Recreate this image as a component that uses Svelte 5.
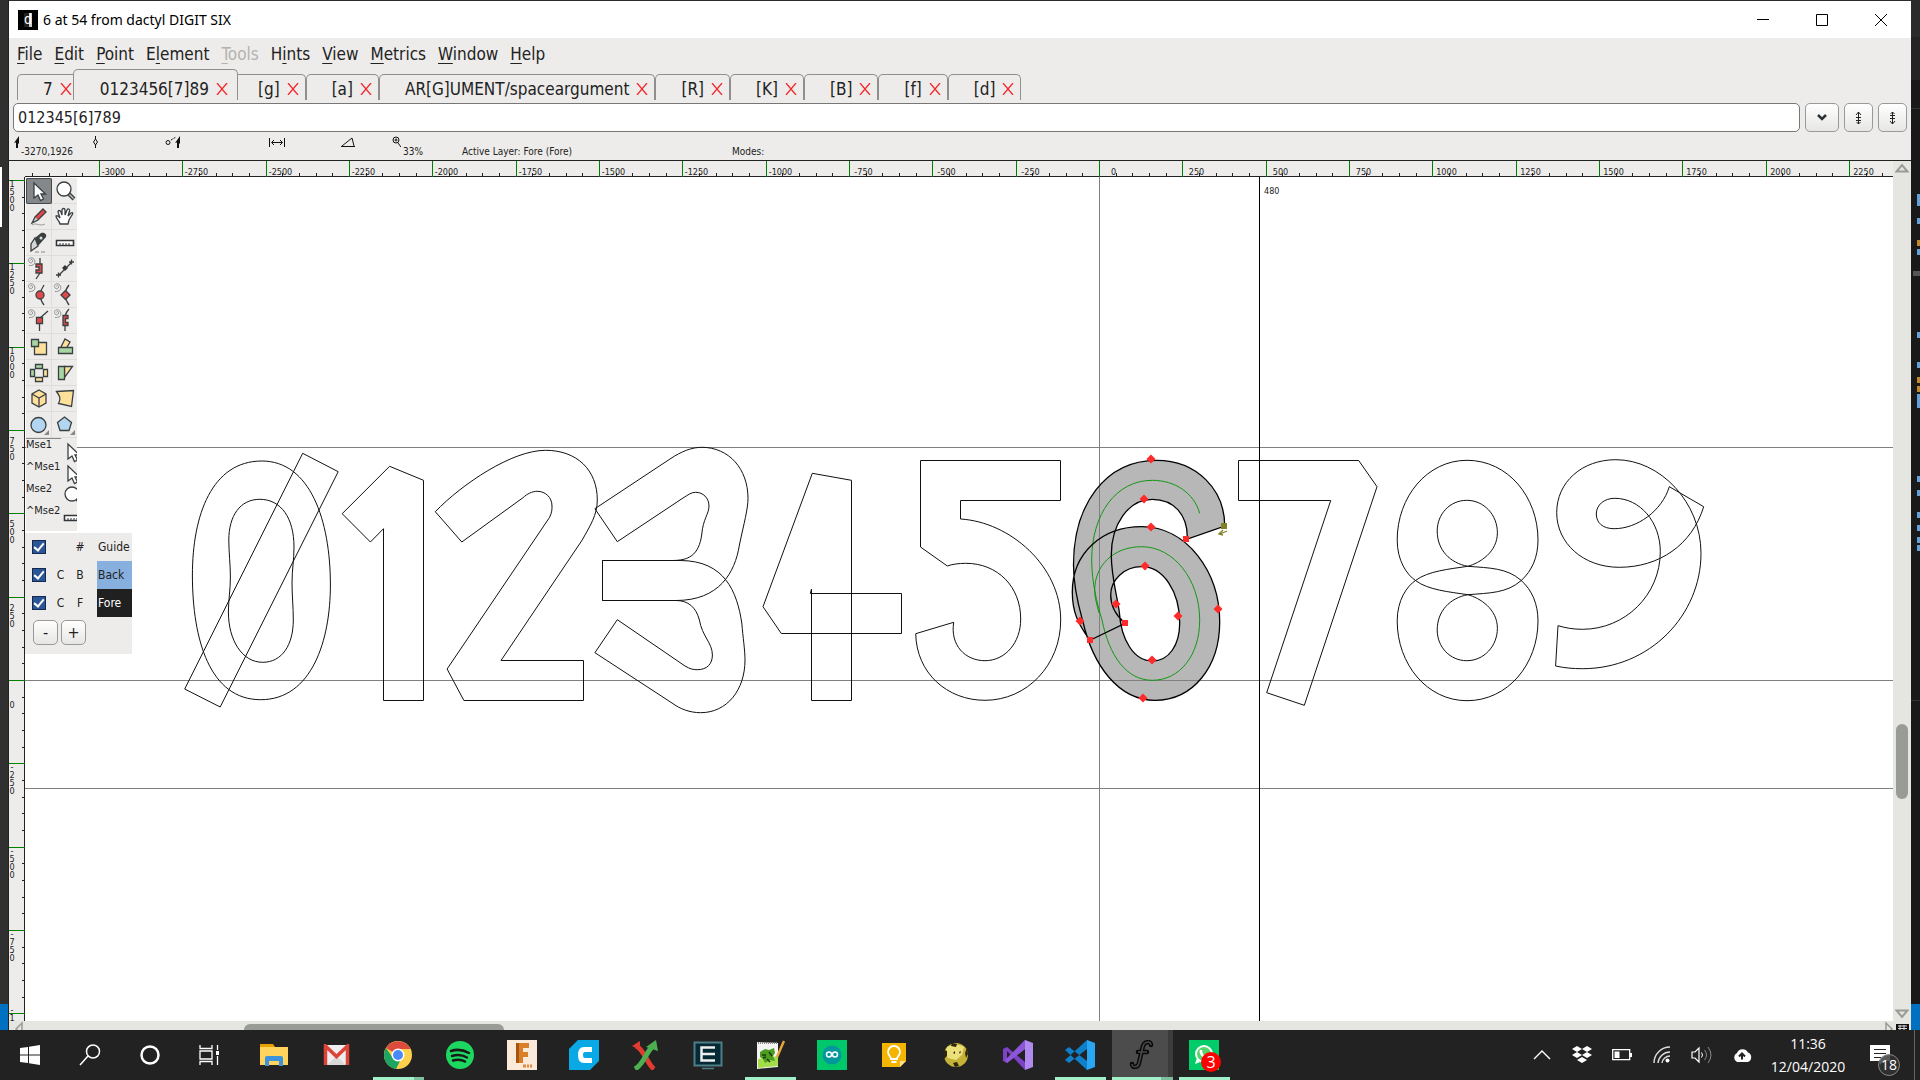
<script>
  const svg = (w, h, body) =>
    `<svg xmlns="http://www.w3.org/2000/svg" width="${w}" height="${h}" viewBox="0 0 ${w} ${h}" fill="none" aria-hidden="true" style="display:block">${body}</svg>`;

  const menus = [
    ['', 'F', 'ile'], ['', 'E', 'dit'], ['', 'P', 'oint'], ['E', 'l', 'ement'], ['', 'T', 'ools', true],
    ['H', 'i', 'nts'], ['', 'V', 'iew'], ['', 'M', 'etrics'], ['', 'W', 'indow'], ['', 'H', 'elp']
  ];

  const tabs = ['7', '0123456[7]89', '[g]', '[a]', 'AR[G]UMENT/spaceargument', '[R]', '[K]', '[B]', '[f]', '[d]'];
  let activeTab = $state(1);
  let word = $state('012345[6]789');

  const curl = '<path d="M3 9.500c4 .500 7-2 5.500-5.500S2 1.500 2.500 4.500s4 3 4 .500-2-1.500-2-.500" stroke="#8a9092"/>';
  const ink = 'stroke="#3a4042" stroke-width="1.300"';
  const arrow = `<path d="M8 5v15l4-3 2.500 5.500 3-1.500-2.500-5h4.500z" fill="#fff" stroke="#3a4042" stroke-width="1.300"/>`;
  const lens = `<circle cx="12" cy="11" r="7" fill="#fff" ${ink}/><path d="m17 16 5 5" stroke="#3a4042" stroke-width="4"/><path d="m17.500 16.500 4 4" stroke="#bbb" stroke-width="1.500"/>`;
  const rule = `<path d="M4.500 10.500h17v5h-17z" fill="#fff" stroke="#33373a" stroke-width="1.600"/><path d="M8 15v-2m3 2v-2m3 2v-2m3 2v-2" stroke="#33373a"/>`;

  const tools = [
    ['Pointer', arrow],
    ['Magnify', lens],
    ['Freehand', `<path d="m9 13 8-8 3 3-8 8-4 1z" fill="#e0484a" ${ink}/><path d="m9 13-3 6 6-3" fill="#ccc" ${ink}/><path d="M6 21c5-3 7 2 13-1" stroke="#999"/>`],
    ['Hand', `<path d="M8 20c-1-4-4-5-4-8 2-1 3 1 4 2L6 8c0-2 2-2 3 0l1 3V6c0-2 3-2 3 0v5l2-5c1-2 3-1 2.500 1l-1.500 5 3-3c2-1 2 1 1 2l-3 5-1 4z" fill="#fff" ${ink}/>`],
    ['Knife', `<path d="m9 8 6-5c3-1 6 1 5 4l-8 9z" fill="#3a4042"/><path d="m9 8 3 8-7 5v-7z" fill="#d5d7d6" ${ink}/><circle cx="15" cy="8" r="1.500" fill="#ddd"/><path d="M9 22h12" stroke="#888" stroke-dasharray="4 2"/>`],
    ['Ruler', rule],
    ['Spiro curve point', curl + `<path d="M14 2v6m0 9-4 6" ${ink}/><path d="M10 8h6v9h-6v-3h3v-3h-3z" fill="#e0484a" ${ink}/>`],
    ['Spiro line', `<path d="m7 19 13-13M4 19h5M6.500 16.500v5M17 6h5M19.500 3.500v5" ${ink}/><path d="m10 12 3-3 3 3-3 3z" fill="#33373a"/>`],
    ['Curve point', curl + `<path d="M18 3c-4 6-6 12 0 20" ${ink}/><circle cx="14" cy="13" r="4" fill="#e0484a" ${ink}/>`],
    ['HVCurve point', curl + `<path d="M17 3c-5 6-5 13 0 20" ${ink}/><path d="m9 13 4.500-4.500L18 13l-4.500 4.500z" fill="#e0484a" ${ink}/>`],
    ['Corner point', curl + `<path d="m14 10 8-7m-8.500 10v10" ${ink}/><path d="M10.500 9.500h6v6h-6z" fill="#e0484a" ${ink}/>`],
    ['Tangent point', curl + `<path d="M13 8c1-3 2-5 4-7m-4 14v8" ${ink}/><path d="M11 7.500h5v3h-2.500v4H16v3h-5z" fill="#e0484a" ${ink}/>`],
    ['Scale', `<path d="M8.500 8.500h12v12h-12z" fill="#ffe09a" ${ink}/><path d="M5.500 5.500h7v7h-7z" fill="#a8d5a4" ${ink}/>`],
    ['Rotate', `<path d="m9 13 4-8 5 3-4 7z" fill="#ffe09a" ${ink}/><path d="M6.500 13.500h14v6h-14z" fill="#a8d5a4" ${ink}/>`],
    ['Flip', `<path d="M9.500 4.500h7v4h-7zM4.500 9.500h4v7h-4z" fill="#a8d5a4" ${ink}/><path d="M9.500 17.500h7v4h-7zM17.500 9.500h4v7h-4z" fill="#ffe09a" ${ink}/>`],
    ['Skew', `<path d="M12.500 17.500v-11h8z" fill="#ffe09a" ${ink}/><path d="M6.500 6.500h6v13h-6z" fill="#a8d5a4" ${ink}/>`],
    ['3D rotate', `<path d="m13 4 7 4v9l-7 4-7-4V8z" fill="#ffe09a" ${ink}/><path d="m6 8 7 4 7-4m-7 4v9" ${ink}/>`],
    ['Perspective', `<path d="m4.500 5.500 17-1-2 16-13-3c3-5 1-8-2-12z" fill="#ffe09a" ${ink}/>`],
    ['Ellipse', `<circle cx="12.500" cy="13" r="7.500" fill="#b2d5f2" ${ink}/><path d="M23 18v5h-5z" fill="#888"/>`],
    ['Polygon', `<path d="m12.500 5 7 5.500-2.500 8H8L5.500 10.500z" fill="#b2d5f2" ${ink}/><path d="M23 18v5h-5z" fill="#888"/>`]
  ];

  const bindings = [['Mse1', arrow], ['^Mse1', arrow], ['Mse2', lens], ['^Mse2', rule]];

  const status = [
    [svg(12, 12, '<path d="M6 0v8L4 6 1 7zM5 6v6h-2V6z" fill="#111"/>'), '-3270,1926'],
    [svg(9, 12, '<path d="m4.500 3 2 3-2 3-2-3zM4.500 0v3m0 6v3" stroke="#111"/>'), ''],
    [svg(18, 12, '<circle cx="3" cy="6.500" r="2" stroke="#111"/><path d="m6 4 5-3" stroke="#111" stroke-dasharray="2 1"/><path d="M15 0v8l-2-2-3 1zM14 6v6h-2V6z" fill="#111"/>'), ''],
    [svg(17, 12, '<path d="M.5 2v9m15-9v9M3 6.500h10M5 4 2.500 6.500 5 9m6-5 2.500 2.500L11 9" stroke="#111"/>'), ''],
    [svg(17, 12, '<path d="M1 10.500h14M2 10l10-8 2 8" stroke="#111"/>'), ''],
    [svg(10, 12, '<circle cx="5" cy="4" r="3" stroke="#111"/><path d="M5 2.500v3M3.500 4h3M7 7l3 4" stroke="#111"/>'), '33%'],
    ['', 'Active Layer: Fore (Fore)'],
    ['', 'Modes:']
  ];

  // Canvas scale: three font units to one pixel, origin at (1099.5, 680.5)
  const originX = 1099;
  const originY = 680;
  const canvasBottom = 1021;
  const unitX = (u) => Math.round(originX + u / 3) + 0.5;
  const unitY = (u) => Math.round(originY - u / 3) + 0.5;
  const range = (from, to, step) => Array.from({ length: Math.floor((to - from) / step) + 1 }, (_, i) => from + i * step);
  const xMajor = range(-3000, 2250, 250);
  const xMinor = range(-3200, 2350, 50).filter((u) => u % 250);
  const yMajor = range(-1000, 1500, 250);
  const yMinor = range(-1000, 1500, 50).filter((u) => u % 250);

  // Ruler labels on the left are set one digit per line; digits past the canvas are dropped
  const stacked = (u) => {
    const chars = String(u).split('');
    return chars
      .map((ch, i) => ({ ch, y: unitY(u) + 6 + (4 - chars.length) * 7 + i * 8 }))
      .filter((d) => d.y < canvasBottom);
  };

  const half8 = 'M1467 460.300C1427 460.300 1397.200 497 1397.200 540C1397.200 561 1407 575 1415.800 580.700C1428 590 1450 592 1467.800 594.700C1480 598 1497.400 609 1497.400 628.300C1497.400 646 1484 660.700 1466.800 660.700C1450 660.700 1437.200 647 1437.200 630C1437.200 611 1450 598 1467.800 594.700C1490 593 1507 593 1521 580.700C1532 571 1538 557 1538 540C1538 497 1508 460.300 1467 460.300Z';
  const outlines = [
    'M192.400 575C192.400 515 212 461 261.800 461C310 461 330.400 520 330.400 585C330.400 640 312 699.700 260.600 699.700C210 699.700 192.400 640 192.400 575Z',
    'M259.800 499.300C240 499.300 228.800 516 228.800 540C228.800 552 230.400 565 230.400 577C230.400 590 228.400 600 228.400 612C228.400 640 242 662.300 262.700 662.300C282 662.300 293.300 645 293.300 620C293.300 607 292 595 292 583C292 570 294 560 294 547C294 518 281 499.300 259.800 499.300Z',
    'M302.700 453.300L338.200 471.700L220.200 707L184.700 689Z',
    'M389.600 466.300L423.500 480.300V700.500H383.500V528.700L370.400 542L342.200 513.700Z',
    'M435.300 511.700C462 484 512 450.300 545.500 450.300C577 450.300 597.300 470 597.300 500C597.300 515 590 526 582.200 540L501 660.500H583.500V700.500H463.900L447.100 669L549.600 517.300C552 512 552 510 552 506C552 497 545 491.300 537.300 491.300C532 491.300 527 494 523 497.700L461.800 542Z',
    'M594.900 508.700L670 459C682 451 692 447.300 701.800 447.300C729 447.300 748 469 748 498.300C748 509 744 523 739.400 545C735 573 719 600.500 676 600.500H602.500V560.500H672C688 560.500 699 556 701.800 534C703 519 709 514 709 506C709 498 703 492.300 695.700 492.300C691 492.300 688 495 683 498L617.300 541.700Z',
    'M602.500 560.500H680C725 560.500 737 592 741.800 623C743 638 745 650 745 660C745 690 727 712.700 700.600 712.700C690 712.700 680 709 672 703L594.900 652.700L617.300 619.700L685 666C690 669 693 669.700 697.300 669.700C707 669.700 712.400 664 712.400 655C712.400 643 702 636 699.400 620C696 607 688 600.500 676 600.500H602.500Z',
    'M812.300 473.300L851.500 480.300V700.500H811.500V589L810.300 593.500H901.500V633.500H781.300L763 606.700Z',
    'M920.500 460.500H1060.500V500.500H960.500V519C1010 522 1060.700 566 1060.700 620C1060.700 665 1027 700.300 985 700.300C947 700.300 916.500 673 915.700 633.700L953.700 622.300C950 645 965 660.700 985 660.700C1005 660.700 1020.700 643 1020.700 619C1020.700 587 998 563.300 965.700 563.300C959 563.300 952 564.300 947.300 566L920.500 547Z',
    'M1238.500 460.500H1358.700L1377 486.700L1304.300 705.300L1266.700 692.700L1330.700 500.500H1238.500Z',
    half8,
    'M1615.900 459.700C1582 459.700 1556.700 482 1556.700 512.700C1556.700 543 1583 567.300 1619.300 567.300C1659 567.300 1692 545 1703.700 506.700L1669.300 486.700C1662 511 1637 528.700 1614.200 528.700C1603 528.700 1596.300 523 1596.300 514C1596.300 505 1604 498.300 1614.800 498.300C1640 498.300 1660.300 522 1660.300 551.700C1660.300 595 1625 629.300 1582.500 629.300C1573 629.300 1566 628 1558 625.700L1555.600 666C1565 668 1573 668.700 1582.500 668.700C1650 668.700 1701 615 1701 553.300C1701 502 1660 459.700 1615.900 459.700Z'
  ];
  const six = 'M1224.700 526C1224.700 490 1197 460.300 1156.700 460.300C1105 460.300 1073.500 505 1073.500 565C1073.500 590 1080 611 1083 622C1093 665 1118 700.300 1155 700.300C1193 700.300 1219.700 667 1219.700 622C1219.700 572 1187 526.700 1141.700 526.700C1102 526.700 1072.300 553 1072.300 592C1072.300 612 1078 624 1090 640.300L1125 623.300C1112 612 1110.700 602 1110.700 595C1110.700 580 1124 566.700 1141.700 566.700C1163 566.700 1179.700 591 1179.700 623C1179.700 645 1169 661 1152.300 661C1134 661 1121 640 1119.300 612C1117 595 1111.300 577 1111.300 555C1111.300 525 1128 499.300 1152.300 499.300C1174 499.300 1188 515 1187.300 539Z';
  const sixCore = 'M1199.700 513.300C1194 493 1175 480.300 1152.300 480.300C1116 480.300 1091.700 514 1091.700 560C1091.700 582 1097 603 1102 620C1109 655 1126 680.300 1152.300 680.300C1180 680.300 1199.700 655 1199.700 620C1199.700 580 1174 546.700 1141.700 546.700C1113 546.700 1094.700 566 1094.700 590C1094.700 598 1097 605 1099 613';
  const curvePoints = [[1151, 459], [1144, 499], [1151, 527], [1145, 566], [1218, 609], [1178, 616], [1152, 660], [1143, 698], [1080, 621], [1116, 604]];
  const cornerPoints = [[1186, 539], [1125, 623], [1090, 640]];

  let layers = $state([
    { on: true, c: '', k: '#', name: 'Guide', cls: 'guide' },
    { on: true, c: 'C', k: 'B', name: 'Back', cls: 'back' },
    { on: true, c: 'C', k: 'F', name: 'Fore', cls: 'fore' }
  ]);

  const system = [
    ['Start', svg(20, 20, '<path d="M0 3 8 2v7.500H0zM9 1.800 20 0v9.500H9zM0 10.500h8V18l-8-1zM9 10.500h11V20L9 18.200z" fill="#fff"/>')],
    ['Search', svg(22, 22, '<circle cx="14" cy="7.500" r="6.500" stroke="#fff" stroke-width="1.500"/><path d="m9 12-8 9" stroke="#fff" stroke-width="1.500"/>')],
    ['Cortana', svg(22, 22, '<circle cx="11" cy="11" r="8.500" stroke="#fff" stroke-width="2.500"/>')],
    ['Task View', svg(22, 20, '<path d="M1 0v3.500h12V0M1 20v-3.500h12V20M1 6h12v8H1zM18.500 0v5m0 6v9" stroke="#fff" stroke-width="1.300"/><path d="M17 6h3v4h-3z" fill="#fff"/>')]
  ];

  const apps = [
    ['File Explorer', '', svg(28, 24, '<path d="M0 1h13l2 3H0z" fill="#e8a000"/><path d="M0 4h28v18H0z" fill="#ffd35c"/><path d="M5 23v-8q0-2 2-2h14q2 0 2 2v8h-4v-5H9v5z" fill="#3b93dc"/>')],
    ['Gmail', '', svg(27, 22, '<path d="M1 1h25v20H1z" fill="#eee"/><path d="m4 21 9.500-9L23 21z" fill="#d8d8d8"/><path d="M2.500 21V2L13.500 12.500 24.500 2v19" stroke="#dc4437" stroke-width="3.500"/>')],
    ['Chrome', 'open stack', svg(28, 28, '<circle cx="14" cy="14" r="14" fill="#fdd04c"/><path d="M14 14 2 7A14 14 0 0 1 26.500 8H14z" fill="#dc4b3e"/><path d="M2 7a14 14 0 0 0 10 21l5-10-8-1z" fill="#1da462"/><circle cx="14" cy="14" r="6.500" fill="#fff"/><circle cx="14" cy="14" r="5" fill="#4a8af4"/>')],
    ['Spotify', '', svg(28, 28, '<circle cx="14" cy="14" r="14" fill="#1ed760"/><path d="M5 10q9-3 18 2M6 15q8-2.500 15 1.500M7 19.500q7-2 12 1" stroke="#191919" stroke-width="2.500" stroke-linecap="round"/>')],
    ['Fusion 360', '', svg(30, 30, '<path d="M0 0h30v30H0z" fill="#fbe9da"/><path d="M9 3h13v5h-6v4h5v5h-5v6H9z" fill="#d97f27"/><path d="M9 3h3v20H9z" fill="#a8560f"/><path d="M16 26h3m1 0h2m1 0h2" stroke="#e58a3d" stroke-width="3"/>')],
    ['Cura', '', svg(30, 30, '<path d="M9 0h21v21l-9 9H0V9z" fill="#0ba8e6"/><path d="M23 7h-8q-6 0-6 8t6 8h8v-5h-7q-2 0-2-3t2-3h7z" fill="#fff"/>')],
    ['Fritzing', '', svg(28, 30, '<path d="M4 6c8 3 11 18 18 23" stroke="#e23b30" stroke-width="5"/><path d="M3 29C12 24 14 12 21 6" stroke="#4caf50" stroke-width="5"/><path d="m14 7 10-7 2 11z" fill="#4caf50"/><path d="M0 6 8 1v9z" fill="#e23b30"/>')],
    ['Editor', '', svg(30, 30, '<path d="M1.500 2.500h27v23h-27z" fill="#062a35" stroke="#4d7d86" stroke-width="2"/><path d="M22 7.500H8.500v13H22M9 14h13" stroke="#eee" stroke-width="2.500"/><path d="M9 28.500h12" stroke="#4d7d86" stroke-width="1.500"/>')],
    ['Notepad++', 'open', svg(30, 30, '<path d="m2 2 21 1v24L2 29z" fill="#f4f4f4"/><path d="m3 19 20-3v10L3 28z" fill="#a5dc4a"/><path d="m5 12 5-3 4 1 5-2 1 5-2 3 2 5-5-1-5 3-2-4-3-2z" fill="#4e9d22"/><path d="M7 15h4m1 4 3 3m-1-10 3 4m-9 2 3-1" stroke="#173b0a" stroke-width="1.500"/><path d="m29 1-7 16" stroke="#e8a43a" stroke-width="2.500"/><path d="M3 3h20" stroke="#888" stroke-width="2" stroke-dasharray="1 1"/>')],
    ['Arduino', '', svg(30, 30, '<path d="M0 0h30v30H0z" fill="#00c86a"/><circle cx="15" cy="15" r="9.500" fill="#00979c"/><circle cx="12" cy="14.500" r="2.500" stroke="#fff" stroke-width="1.500"/><circle cx="18" cy="14.500" r="2.500" stroke="#fff" stroke-width="1.500"/>')],
    ['Keep', '', svg(24, 24, '<path d="M0 0h24v18l-6 6H0z" fill="#f5b400"/><path d="M24 18h-6v6z" fill="#ffe08a"/><path d="M9 16c0-3-3-3-3-7a6 6 0 0 1 12 0c0 4-3 4-3 7zM9.500 19h5" stroke="#fff" stroke-width="1.800"/>')],
    ['Golden ball', '', svg(28, 26, '<circle cx="14" cy="13" r="12" fill="#c4b338"/><path d="M5 5q9-5 17 0l-2 8-6 5-8-2-3-4z" fill="#ece07a"/><path d="m10 1 5 1-1 3-5-1zM2 8l3 1v5l-3 3zM25 6l1 6-2 4-1-5zM11 21l4-1 2 4-4 1zM11 11l2-2v3zM17 10l2-1-1 3z" fill="#2d260c"/>')],
    ['Visual Studio', '', svg(30, 30, '<path d="m22 0 8 3v24l-8 3z" fill="#b18af0"/><path d="m22 0v9L4 23l-4-2V9l4-2 18 15v8L4 11v8z" fill="#7c42c8"/><path d="M22 0v9L4 23l-2-3z" fill="#8d55d8"/>')],
    ['VS Code', 'open', svg(30, 30, '<path d="m22 0 8 3v24l-8 3z" fill="#2aa5f2"/><path d="M22 0v9L4 23l-4-3zM22 30v-9L4 7l-4 3z" fill="#0f7fc9"/>')],
    ['FontForge', 'open current stack', svg(26, 30, '<path d="M22 5c0-4-6-4-8 1l-4 17c-1 5-7 5-7 1M9 12h9" stroke="#0a0a0a" stroke-width="4.500" stroke-linecap="round"/><path d="M22 5c0-4-6-4-8 1l-4 17c-1 5-7 5-7 1M9 12h9" stroke="#4a4a4a" stroke-width="1.500"/>')],
    ['WhatsApp', 'open', svg(30, 30, '<path d="M0 0h30v30H0z" fill="#00cc6a"/><circle cx="15" cy="14" r="8" fill="#5bd36b" stroke="#fff" stroke-width="2"/><path d="m6 24 1.500-5 3.500 3z" fill="#fff"/><path d="M12 10c-1 4 3 8 7 8" stroke="#fff" stroke-width="2.500"/>')]
  ];

  const tray = [
    ['Show hidden icons', svg(18, 10, '<path d="m1 9 8-8 8 8" stroke="#fff" stroke-width="1.400"/>')],
    ['Dropbox', svg(20, 18, '<path d="m5 0 5 3-5 3-5-3zm10 0 5 3-5 3-5-3zM5 6l5 3-5 3-5-3zm10 0 5 3-5 3-5-3zm-5 5 5 3-5 3-5-3z" fill="#fff"/>')],
    ['Battery', svg(20, 12, '<path d="M.700.700h17v10h-17z" stroke="#fff" stroke-width="1.300"/><path d="M2.500 2.500h5v6.500h-5zM18 4h2v4h-2z" fill="#fff"/>')],
    ['Wi-Fi', svg(18, 18, '<path d="M1 17A16 16 0 0 1 17 1M5 17A12 12 0 0 1 17 6M9 17a8 8 0 0 1 8-7" stroke="#ddd" stroke-width="1.400"/><circle cx="14.500" cy="14.500" r="2" fill="#fff"/>')],
    ['Volume', svg(22, 18, '<path d="M1 6h3l4-4v14l-4-4H1z" stroke="#fff" stroke-width="1.200"/><path d="M10.500 6.500q2 2.500 0 5" stroke="#fff"/><path d="M13.500 4q4 5 0 10M17 1q6 8 0 16" stroke="#888"/>')],
    ['Backup', svg(20, 14, '<path d="M5 14a5 5 0 0 1 0-9 6 6 0 0 1 11-.5A5 5 0 0 1 15.500 14z" fill="#fff"/><path d="M10 11.500V6M7 8.500l3-3 3 3" stroke="#222" stroke-width="2"/>')]
  ];
</script>

<div class="desktop">
  <div class="workspace">
    <div class="edge left"></div>
    <main class="window">
      <header class="titlebar">
        <span class="appicon">d</span>
        <h1>6 at 54 from dactyl DIGIT SIX</h1>
        <button aria-label="Minimize">{@html svg(12, 12, '<path d="M0 5.500h12" stroke="#000"/>')}</button>
        <button aria-label="Maximize">{@html svg(12, 12, '<path d="M.5.5h11v11H.5z" stroke="#000"/>')}</button>
        <button aria-label="Close">{@html svg(12, 12, '<path d="m0 0 12 12M12 0 0 12" stroke="#000"/>')}</button>
      </header>

      <nav class="menubar">
        {#each menus as [pre, key, post, off]}
          <button disabled={off}>{pre}<u>{key}</u>{post}</button>
        {/each}
      </nav>

      <div class="tabs">
        {#each tabs as tab, i}
          <div class="tab" class:active={i === activeTab}>
            <button class="tabname" onclick={() => (activeTab = i)}>{tab}</button>
            <button class="close" aria-label="Close {tab}">{@html svg(12, 12, '<path d="m1 0 10 12M11 0 1 12" stroke="#f4282c" stroke-width="1.300"/>')}</button>
          </div>
        {/each}
      </div>

      <div class="entry">
        <input type="text" aria-label="Word list" bind:value={word} />
        <button class="drop" aria-label="Show word list">{@html svg(10, 8, '<path d="m1 1 4 4 4-4" stroke="#2e3436" stroke-width="2.500"/>')}</button>
        <button aria-label="Previous">{@html svg(9, 14, '<path d="M4.500 1v12M2 4l2.500-3L7 4M2 6.500h5M2 9.500h5M2.500 11l2 2 2-2" stroke="#222"/>')}</button>
        <button aria-label="Next">{@html svg(9, 14, '<path d="M4.500 1v12M2 10l2.500 3L7 10M2 4.500h5M2 7.500h5M2.500 3l2-2 2 2" stroke="#222"/>')}</button>
      </div>

      <div class="status">
        {#each status as [icon, text]}
          <div><span class="glyph">{@html icon}</span><span class="value">{text}</span></div>
        {/each}
      </div>

      <section class="editor">
        <svg class="ruler-x" width="100%" height="16">
          <g transform="translate(-9 -161)">
            <path d="M25 176.500H1893" stroke="#222" />
            {#each xMinor as u}<path d="M{unitX(u)} 173v3" stroke="#222" />{/each}
            {#each xMajor as u}
              <path d="M{unitX(u)} 161v16" stroke="#008000" />
              <text x={unitX(u) + 14} y="175" text-anchor="middle">{u}</text>
            {/each}
          </g>
        </svg>

        <svg class="ruler-y" width="16" height="100%">
          <g transform="translate(-9 -177)">
            <path d="M24.500 177V1030" stroke="#222" />
            {#each yMinor as u}<path d="M22 {unitY(u)}h3" stroke="#222" />{/each}
            {#each yMajor as u}
              <path d="M9 {unitY(u)}h16" stroke="#008000" />
              {#each stacked(u) as d}
                <text x="12" y={d.y} text-anchor="middle">{d.ch}</text>
              {/each}
            {/each}
          </g>
        </svg>

        <div class="canvas">
          <svg class="drawing" width="100%" height="100%">
            <g transform="translate(-25 -177)" fill="none">
              <path d="M25 447.500H1893M25 680.500H1893M25 788.500H1893M1099.500 177V1021" stroke="#808080" />
              <path d={six} fill="#b7b7b7" />
              <path d="M1099.500 460V701M1072 680.500H1222" stroke="#808080" />
              <path d={sixCore} stroke="#149614" />
              <path d="M1259.500 177V1021" stroke="#000" />
              <g stroke="#111">
                {#each outlines as d}<path {d} />{/each}
                <path d={half8} transform="matrix(1 0 0 -1 0 1161)" />
              </g>
              <path d={six} stroke="#000" stroke-width="1.300" />
              {#each curvePoints as [x, y]}
                <path d="M{x - 4.500} {y}l4.500-4.500 4.500 4.500-4.500 4.500z" fill="#ff2a2a" />
              {/each}
              {#each cornerPoints as [x, y]}
                <rect x={x - 3} y={y - 3} width="6" height="6" fill="#ff2a2a" />
              {/each}
              <path d="M1221 523h6v6h-6z" fill="#808028" />
              <path d="M1227 531l-7 3m3-4-4 4 4 1" stroke="#808028" stroke-width="1.300" />
              <text x="1264" y="194">480</text>
            </g>
          </svg>

          <aside class="toolbox">
            <div class="toolgrid">
              {#each tools as [name, body], i}
                <button class:selected={i === 0} aria-label={name}>{@html svg(26, 26, body)}</button>
              {/each}
            </div>
            <hr />
            <ul>
              {#each bindings as [name, body]}
                <li><span>{name}</span><i>{@html svg(26, 26, body)}</i></li>
              {/each}
            </ul>
          </aside>

          <aside class="layers">
            {#each layers as layer}
              <label>
                <input type="checkbox" bind:checked={layer.on} />
                <span>{layer.c}</span>
                <span>{layer.k}</span>
                <span class="name {layer.cls}">{layer.name}</span>
              </label>
            {/each}
            <div class="layerbuttons">
              <button aria-label="Remove layer">-</button>
              <button aria-label="Add layer">+</button>
            </div>
          </aside>
        </div>

        <div class="scroll-y">
          {@html svg(14, 10, '<path d="M1.500 8.500h11L7 2z" stroke="#999b96" stroke-width="2"/>')}
          <span class="track"><span class="thumb"></span></span>
          {@html svg(14, 10, '<path d="M1.500 1.500h11L7 8z" stroke="#999b96" stroke-width="2"/>')}
        </div>

        <div class="scroll-x">
          {@html svg(9, 9, '<path d="M8 2v12L2 8z" stroke="#999b96" stroke-width="1.500"/>')}
          <span class="track"><span class="thumb"></span></span>
          {@html svg(9, 9, '<path d="M1 2v12l6-6z" stroke="#999b96" stroke-width="1.500"/>')}
          <span class="corner">{@html svg(13, 6, '<path d="M0 0h13v6H0z" fill="#111"/><path d="M2 2h9M2 4.500h9M4 1v5m4-5v5" stroke="#ddd"/>')}</span>
        </div>
      </section>
    </main>
    <div class="edge right">
      <svg width="9" height="1004" aria-hidden="true">
        <path d="M0 0h9v37H0z" fill="#2b2b2b" /><path d="M0 37h9v43H0z" fill="#242424" />
        <path d="M0 108.500h9M0 700.500h9" stroke="#333" />
        {#each [[194, 12], [218, 6], [249, 6], [332, 6], [362, 6], [394, 14], [476, 6], [490, 6], [512, 6], [525, 6], [537, 6], [545, 6]] as [y, h]}
          <rect x="6" {y} width="3" height={h} fill="#64a0dc" />
        {/each}
        {#each [240, 377, 386] as y}<rect x="6" {y} width="3" height="6" fill="#c08a2c" />{/each}
        <rect x="2" y="271" width="7" height="5" fill="#555" />
      </svg>
    </div>
  </div>

  <footer class="taskbar">
    {#each system as [name, icon]}
      <button class="sys" aria-label={name}>{@html icon}</button>
    {/each}
    <div class="apps">
      {#each apps as [name, cls, icon]}
        <button class="app {cls}" aria-label={name}>
          {@html icon}
          {#if name === 'WhatsApp'}<span class="badge">3</span>{/if}
        </button>
      {/each}
    </div>
    <div class="tray">
      {#each tray as [name, icon]}
        <button aria-label={name}>{@html icon}</button>
      {/each}
    </div>
    <button class="clock"><time>11:36</time><time>12/04/2020</time></button>
    <button class="notes" aria-label="Notifications">
      {@html svg(20, 20, '<path d="M0 0h20v16h-7l-3 4v-4H0z" fill="#fff"/><path d="M4 4.500h12M4 8.500h12M4 12.500h7" stroke="#222"/>')}
      <span class="count">18</span>
    </button>
    <button class="peek" aria-label="Show desktop"></button>
  </footer>
</div>

<style>
  :global(body) { margin: 0; background: #1e1e1e; }
  * { box-sizing: border-box; }
  button { border: 0; padding: 0; background: none; font: inherit; color: inherit; }

  .desktop {
    display: flex;
    flex-direction: column;
    height: 100vh;
    overflow: hidden;
    color: #222;
    font-family: "DejaVu Sans Condensed", "Noto Sans", sans-serif;
    font-size: 16px;
  }
  .workspace { flex: 1; min-height: 0; display: flex; background: #1c1c1c; }
  .edge { width: 9px; flex: none; overflow: hidden; }
  .edge.left {
    border-right: 1px solid #222;
    background:
      linear-gradient(#fff, #fff) 0 167px / 2px 60px no-repeat,
      linear-gradient(#0070c0, #0070c0) 0 100% / 9px 26px no-repeat,
      #303030;
  }
  .edge.right { background: linear-gradient(#0070c0, #0070c0) 0 100% / 9px 26px no-repeat, #191919; }
  .edge svg { display: block; }

  .window {
    flex: 1;
    min-width: 0;
    display: flex;
    flex-direction: column;
    border-top: 1px solid #2b2b2b;
    background: #edecea;
  }

  .titlebar { display: flex; align-items: center; height: 37px; padding: 0 1px 0 9px; background: #fff; color: #000; }
  .appicon {
    width: 20px; height: 20px; margin-right: 5px;
    border: solid #000; border-width: 3px 6px;
    background: linear-gradient(90deg, #222 65%, #ccc 65%); color: #fff;
    font-size: 14px; line-height: 13px; text-align: center;
  }
  h1 { flex: 1; margin: 0; font: 400 14px/20px "Noto Sans", sans-serif; }
  .titlebar button { width: 59px; height: 37px; display: grid; place-items: center; }

  .menubar { display: flex; gap: 12px; height: 31px; padding: 6px 8px 0; font-size: 17px; line-height: 20px; }
  .menubar button { height: 20px; }
  .menubar button:disabled { color: #b4b3b1; }
  u { text-underline-offset: 3px; }

  .tabs { display: flex; align-items: flex-end; height: 31px; padding-left: 8px; font-size: 17px; }
  .tab {
    display: flex; align-items: center; gap: 7px;
    height: 26px; padding: 2px 6px 0 25px;
    border: 1px solid #8f8f8d; border-bottom: 0; border-radius: 5px 5px 0 0;
  }
  .tab.active { z-index: 1; height: 31px; margin: 0 -6px; padding: 7px 9px 0 26px; background: #edecea; }
  .tabname { line-height: 20px; white-space: nowrap; }

  .entry { display: flex; gap: 5px; height: 32px; padding: 3px 4px 0; }
  .entry input {
    flex: 1; min-width: 0; height: 29px; padding: 0 4px;
    border: 1px solid #777; border-radius: 5px; background: #fff;
    font: inherit; color: inherit; outline: 0;
  }
  .entry button, .layerbuttons button {
    display: grid; place-items: center;
    width: 29px; height: 29px;
    border: 1px solid #999; border-radius: 5px;
    background: linear-gradient(#fff, #e6e6e4);
  }
  .entry .drop { width: 34px; }

  .status {
    display: grid;
    grid-template-columns: 78px 74px 104px 71px 51px 71px 270px 1fr;
    height: 29px; padding: 4px 0 0 4px;
    border-bottom: 1px solid #222;
    font-size: 10px; line-height: 12px;
  }
  .glyph { display: block; height: 10px; }
  .value { display: block; white-space: nowrap; }
  .status div:nth-child(1) .value { padding-left: 8px; }
  .status div:nth-child(6) .value { padding-left: 12px; }

  .editor { flex: 1; min-height: 0; display: grid; grid-template: 16px 1fr 9px / 16px 1fr 18px; }
  .editor text { font-size: 9px; fill: #222; }
  .ruler-x { grid-area: 1 / 1 / 2 / 3; }
  .ruler-y { grid-area: 2 / 1 / 3 / 2; }
  .canvas { grid-area: 2 / 2; position: relative; background: #fff; overflow: hidden; }
  .drawing { display: block; }

  .toolbox { position: absolute; left: 1px; top: 1px; width: 51px; height: 353px; overflow: hidden; background: #edecea; }
  .toolgrid { display: grid; grid-template-columns: 26px 26px; }
  .toolgrid button { height: 26px; box-shadow: inset -1px -1px #dedddb; }
  .toolgrid .selected { background: #84888b; box-shadow: inset 0 0 0 1px #44484a; border-radius: 2px; }
  hr { width: 35px; height: 1px; margin: 0; border: 0; background: #888; }
  ul { margin: 0; padding: 0; list-style: none; font-size: 11px; line-height: 12px; }
  li { display: flex; height: 22px; }
  li span { flex: none; width: 34px; white-space: nowrap; }
  li i { flex: none; width: 26px; }

  .layers { position: absolute; left: 0; top: 356px; width: 107px; height: 121px; background: #edecea; font-size: 12px; }
  .layers label { display: grid; grid-template-columns: 27px 17px 22px 6px 35px; align-items: center; height: 28px; line-height: 28px; }
  .layers label > span:not(.name) { text-align: center; }
  .layers label > .name { grid-column: 5; }
  .layers input {
    display: grid; place-items: center;
    appearance: none; width: 14px; height: 14px; margin: 0 0 0 7px;
    border: 1px solid #14294e;
    background: #2a5596;
  }
  .layers input:checked::after {
    content: "";
    width: 4px; height: 8px;
    margin-bottom: 2px;
    border: solid #fff; border-width: 0 2px 2px 0;
    transform: rotate(40deg);
  }
  .name { padding-left: 1px; overflow: hidden; }
  .back { background: #87b0de; }
  .fore { background: #202020; color: #fff; }
  .layerbuttons { display: flex; gap: 3px; padding: 3px 8px; }
  .layerbuttons button { width: 25px; height: 25px; font-size: 16px; }

  .scroll-y { grid-area: 1 / 3 / 3 / 4; display: flex; flex-direction: column; align-items: center; padding: 2px 0; background: #e5e5e2; }
  .scroll-y .track { flex: 1; padding-top: 551px; }
  .scroll-y .thumb { display: block; width: 12px; height: 75px; border-radius: 6px; background: #999b96; }
  .scroll-x { grid-area: 3 / 1 / 4 / 4; display: flex; padding: 0 2px 0 5px; gap: 2px; overflow: hidden; background: #e5e5e2; }
  .scroll-x .track { flex: 1; padding: 3px 0 0 219px; }
  .scroll-x .thumb { display: block; width: 260px; height: 12px; border-radius: 6px; background: #999b96; }
  .corner { padding-top: 3px; }

  .taskbar { flex: none; display: flex; height: 50px; background: #222; color: #fff; font-family: "Open Sans", sans-serif; font-size: 14px; }
  .sys { width: 60px; display: grid; place-items: center; }
  .apps { display: flex; flex: 1; padding-left: 3px; }
  .app { position: relative; width: 62px; display: grid; place-items: center; }
  .app.open::after { content: ""; position: absolute; left: 6px; right: 5px; bottom: 0; height: 3px; background: #a2f0ca; }
  .app.open.stack::after { background: linear-gradient(90deg, #a2f0ca 80%, #7dbf9f 80%); }
  .app.current { background: linear-gradient(90deg, transparent 1px, #4c4c4c 1px 57px, #3c3c3c 57px); }
  .app.current::after { left: 1px; right: 0; }
  .badge {
    position: absolute; right: 14px; bottom: 8px;
    width: 20px; height: 20px; border-radius: 50%;
    background: #f00; font-size: 16px; line-height: 20px;
  }
  .tray { display: flex; }
  .tray button { width: 40px; display: grid; place-items: center; }
  .clock { width: 92px; display: flex; flex-direction: column; justify-content: center; text-align: center; line-height: 23px; }
  .notes { position: relative; width: 52px; margin-right: 8px; display: grid; place-items: center; }
  .peek { width: 6px; border-left: 1px solid #666; }
  .count {
    position: absolute; right: 6px; bottom: 4px;
    width: 22px; height: 22px; border: 1px solid #888; border-radius: 50%;
    background: #333c; font-size: 14px; line-height: 20px;
  }
</style>
